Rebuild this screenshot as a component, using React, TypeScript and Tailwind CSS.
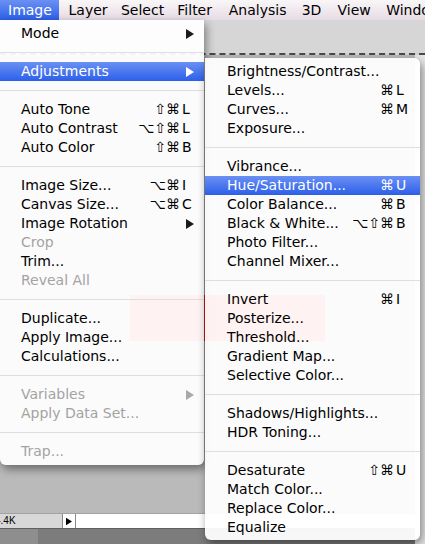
import React from 'react';

type Entry =
  | 'sep'
  | { label: string; keys?: string; sub?: boolean; off?: boolean; on?: boolean };

const imageMenu: Entry[] = [
  { label: 'Mode', sub: true },
  'sep',
  { label: 'Adjustments', sub: true, on: true },
  'sep',
  { label: 'Auto Tone', keys: '⇧⌘L' },
  { label: 'Auto Contrast', keys: '⌥⇧⌘L' },
  { label: 'Auto Color', keys: '⇧⌘B' },
  'sep',
  { label: 'Image Size...', keys: '⌥⌘I' },
  { label: 'Canvas Size...', keys: '⌥⌘C' },
  { label: 'Image Rotation', sub: true },
  { label: 'Crop', off: true },
  { label: 'Trim...' },
  { label: 'Reveal All', off: true },
  'sep',
  { label: 'Duplicate...' },
  { label: 'Apply Image...' },
  { label: 'Calculations...' },
  'sep',
  { label: 'Variables', sub: true, off: true },
  { label: 'Apply Data Set...', off: true },
  'sep',
  { label: 'Trap...', off: true },
];

const adjustMenu: Entry[] = [
  { label: 'Brightness/Contrast...' },
  { label: 'Levels...', keys: '⌘L' },
  { label: 'Curves...', keys: '⌘M' },
  { label: 'Exposure...' },
  'sep',
  { label: 'Vibrance...' },
  { label: 'Hue/Saturation...', keys: '⌘U', on: true },
  { label: 'Color Balance...', keys: '⌘B' },
  { label: 'Black & White...', keys: '⌥⇧⌘B' },
  { label: 'Photo Filter...' },
  { label: 'Channel Mixer...' },
  'sep',
  { label: 'Invert', keys: '⌘I' },
  { label: 'Posterize...' },
  { label: 'Threshold...' },
  { label: 'Gradient Map...' },
  { label: 'Selective Color...' },
  'sep',
  { label: 'Shadows/Highlights...' },
  { label: 'HDR Toning...' },
  'sep',
  { label: 'Desaturate', keys: '⇧⌘U' },
  { label: 'Match Color...' },
  { label: 'Replace Color...' },
  { label: 'Equalize' },
];

const Arrow = ({ className }: { className: string }) => (
  <svg className={className} width="8" height="10" viewBox="0 0 8 10">
    <path d="M0 0 L8 5 L0 10 Z" fill="currentColor" />
  </svg>
);

const MenuRows = ({ items, pl, pr }: { items: Entry[]; pl: string; pr: string }) => (
  <>
    {items.map((it, i) => {
      if (it === 'sep') {
        return (
          <div key={i} className="flex h-[19px] items-center">
            <div className="h-px w-full bg-[#dedede]" />
          </div>
        );
      }
      const tone = it.on
        ? 'bg-linear-to-b from-[#6b90f3] to-[#2c5ee9] text-white'
        : it.off
          ? 'text-[#a3a3a3]'
          : 'text-black';
      return (
        <div key={i} className={`flex h-[19px] items-center ${pl} ${pr} ${tone}`}>
          <span className="flex-1 whitespace-nowrap">{it.label}</span>
          {it.keys && (
            <span className="flex whitespace-nowrap">
              <span className="pr-[2px]">{it.keys.slice(0, -1)}</span>
              <span className="w-[12px]">{it.keys.slice(-1)}</span>
            </span>
          )}
          {it.sub && <Arrow className={it.on ? 'text-white' : it.off ? 'text-[#a8a8a8]' : 'text-[#1a1a1a]'} />}
        </div>
      );
    })}
  </>
);

const menuBar = [
  { name: 'Image', w: 'w-[60px] pl-[8px]', on: true },
  { name: 'Layer', w: 'w-[54px] ml-[10px]' },
  { name: 'Select', w: 'w-[58px]' },
  { name: 'Filter', w: 'w-[53px]' },
  { name: 'Analysis', w: 'w-[75px]' },
  { name: '3D', w: 'w-[37px]' },
  { name: 'View', w: 'w-[50px]' },
  { name: 'Window', w: 'w-[40px] overflow-hidden' },
];

export default function App() {
  return (
    <div className="relative h-[544px] w-[425px] overflow-hidden font-['DejaVu_Sans',sans-serif] text-[14px] text-black">
      {/* top menu bar */}
      <div className="flex h-[20px] items-center bg-linear-to-b from-[#f9f6f8] to-[#e6dce4]">
        {menuBar.map((m) => (
          <div
            key={m.name}
            className={`flex h-full items-center whitespace-nowrap ${m.w} ${
              m.on ? 'bg-linear-to-b from-[#6b90f3] to-[#2c5ee9] text-white' : ''
            }`}
          >
            {m.name}
          </div>
        ))}
      </div>

      {/* application window underneath */}
      <div className="flex h-[524px] flex-col">
        <div className="h-[35px] shrink-0 border-b-2 border-dashed border-[#4a4a4a] bg-[#d6d6d6]" />
        <div className="flex flex-1">
          <div className="flex flex-1 flex-col">
            <div className="relative flex-1 bg-[#bababa]">
              <div className="absolute left-[130px] top-[240px] h-[46px] w-[195px] bg-[#ff2020]" />
            </div>
            <div className="flex h-[16px] border-t border-b border-t-[#a2a2a2] border-b-[#5f5f5f] bg-white text-[10px]">
              <div className="w-[62px] overflow-hidden bg-[#d8d8d8] leading-[14px]">
                <span className="-ml-[5px] inline-block font-['Liberation_Sans',sans-serif]">4.4K</span>
              </div>
              <div className="flex w-[14px] items-center justify-center border-x border-[#8a8a8a] bg-white">
                <Arrow className="h-[9px] w-[6px] text-black" />
              </div>
              <div className="flex-1 bg-white" />
            </div>
            <div className="flex h-[15px]">
              <div className="w-[38px] bg-[#8e8e8e]" />
              <div className="flex-1 bg-[#7c7c7c]" />
            </div>
          </div>
          <div className="w-[10px] bg-[#e6e6e6]" />
        </div>
      </div>

      {/* Image menu */}
      <div className="absolute left-0 top-[20px] w-[204px] rounded-b-[6px] bg-white/94 pt-[4px] pb-[4px] shadow-[2px_4px_10px_rgba(0,0,0,0.45)]">
        <MenuRows items={imageMenu} pl="pl-[21px]" pr="pr-[10px]" />
      </div>

      {/* Adjustments submenu */}
      <div className="absolute left-[205px] top-[58px] w-[215px] rounded-[6px] rounded-tl-none bg-white/94 pt-[4px] pb-[3px] shadow-[2px_4px_10px_rgba(0,0,0,0.45)]">
        <MenuRows items={adjustMenu} pl="pl-[22px]" pr="pr-[12px]" />
      </div>
    </div>
  );
}
